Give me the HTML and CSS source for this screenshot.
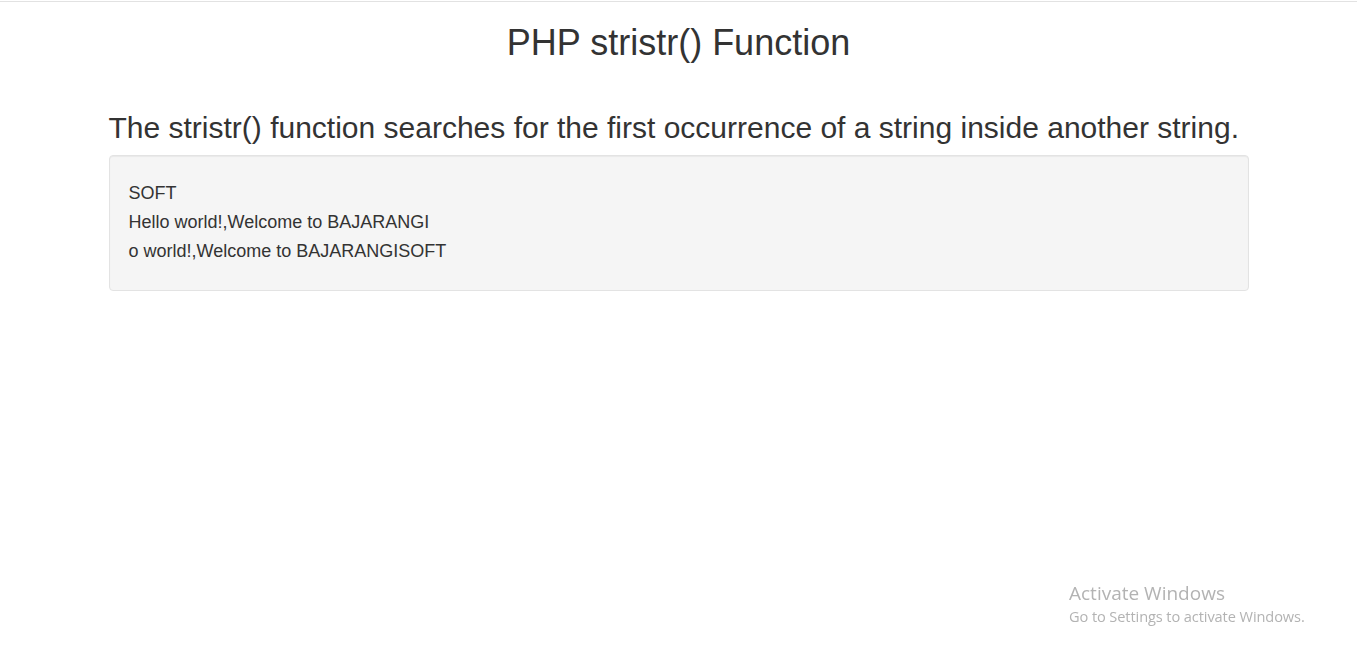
FILE: index.html
```html
<!DOCTYPE html>
<html>
<head>
<meta charset="utf-8">
<title>PHP stristr() Function</title>
<link rel="stylesheet" href="styles.css">
</head>
<body>
<div class="topline"></div>
<div class="container">
  <h1 class="title">PHP stristr() Function</h1>
  <h2 class="lead">The stristr() function searches for the first occurrence of a string inside another string.</h2>
  <div class="well">SOFT<br>Hello world!,Welcome to BAJARANGI<br>o world!,Welcome to BAJARANGISOFT</div>
</div>
<div class="watermark">
  <div class="wm-title">Activate Windows</div>
  <div class="wm-sub">Go to Settings to activate Windows.</div>
</div>
</body>
</html>
```
FILE: styles.css
```css
html, body {
  margin: 0;
  padding: 0;
  background: #fff;
}
body {
  font-family: "Liberation Sans", Arial, Helvetica, sans-serif;
  color: #333;
  padding-right: 4px;
}
.topline {
  margin-top: 1px;
  height: 1px;
  background: #e2e2e2;
}
.container {
  width: 1140px;
  margin: 0 auto;
}
.title {
  font-size: 36px;
  font-weight: 400;
  line-height: 39.6px;
  text-align: center;
  margin: 21px 0 0;
}
.lead {
  font-size: 30px;
  font-weight: 400;
  line-height: 33px;
  margin: 48px 0 11px;
  white-space: nowrap;
}
.well {
  background: #f5f5f5;
  border: 1px solid #e3e3e3;
  border-radius: 4px;
  box-shadow: inset 0 1px 1px rgba(0,0,0,.05);
  padding: 23px 19px 24px;
  font-size: 18px;
  line-height: 29px;
}
.watermark {
  position: fixed;
  left: 1069px;
  top: 580px;
  color: #b3b3b3;
  font-family: "Open Sans", "Noto Sans", sans-serif;
}
.wm-title {
  font-size: 19px;
  line-height: 26px;
}
.wm-sub {
  font-size: 14.6px;
  line-height: 20px;
  letter-spacing: -0.1px;
}
```
